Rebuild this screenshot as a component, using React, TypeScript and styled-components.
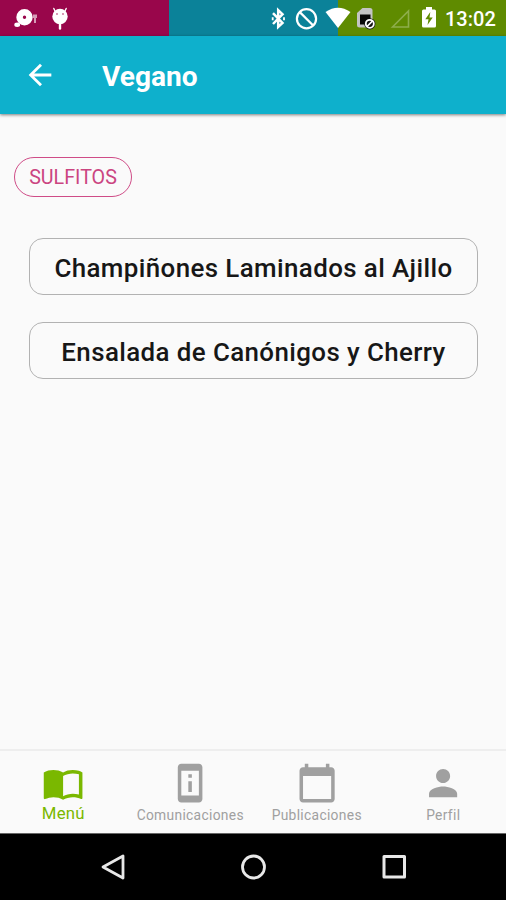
import React from "react";
import styled, { createGlobalStyle } from "styled-components";

const GlobalStyle = createGlobalStyle`
  * { box-sizing: border-box; }
  body { margin: 0; background: #fafafa; font-family: Roboto, "Liberation Sans", sans-serif; }
`;

const Screen = styled.div`
  display: flex;
  flex-direction: column;
  width: 506px;
  height: 900px;
  background: #fafafa;
  overflow: hidden;
`;

const StatusBar = styled.header`
  display: flex;
  justify-content: space-between;
  height: 36px;
  flex: none;
  background: linear-gradient(90deg, #99064b 0 169px, #0b8299 169px 338px, #5f8b00 338px);
`;

const StatusGroup = styled.div`
  display: flex;
  align-items: center;
`;

const StatusIcon = styled.svg<{ $gap?: number }>`
  display: block;
  flex: none;
  margin-left: ${(p) => p.$gap ?? 0}px;
`;

const Clock = styled.span`
  width: 50px;
  margin: 2px 11px 0 8px;
  color: #fff;
  font-size: 20px;
  font-weight: 500;
  line-height: 24px;
  white-space: nowrap;
`;

const AppBar = styled.div`
  display: flex;
  align-items: center;
  height: 78px;
  flex: none;
  padding-left: 23px;
  background: #0eb0cc;
  box-shadow: 0 1px 3px rgba(0, 0, 0, 0.5);
`;

const BackButton = styled.button`
  display: block;
  padding: 0;
  border: 0;
  background: none;
  height: 34px;
`;

const Title = styled.h1`
  margin: 3px 0 0 45px;
  color: #fff;
  font-size: 28.1px;
  font-weight: 700;
  line-height: 34px;
`;

const Content = styled.main`
  flex: 1;
  padding: 43px 28px 0 29px;
`;

const Chip = styled.div`
  display: flex;
  align-items: center;
  justify-content: center;
  width: 118px;
  height: 40px;
  margin: 0 0 41px -15px;
  border: 1.5px solid #cf4c87;
  border-radius: 20px;
  color: #cb4581;
  font-size: 19.7px;
  line-height: 24px;
  padding-top: 2px;
`;

const Dish = styled.div`
  display: flex;
  align-items: center;
  justify-content: center;
  height: 57px;
  margin-bottom: 27px;
  padding-top: 3px;
  border: 1px solid #b2b2b2;
  border-radius: 14px;
  color: #171717;
  font-size: 25.9px;
  font-weight: 500;
  letter-spacing: 0.4px;
  white-space: nowrap;
`;

const Tabs = styled.nav`
  display: grid;
  grid-template-columns: repeat(4, 1fr);
  height: 84px;
  flex: none;
  border-top: 2px solid #eeeeee;
`;

const Tab = styled.div<{ $active?: boolean }>`
  display: flex;
  flex-direction: column;
  align-items: center;
  padding: 11px 0 0 ${(p) => (p.$active ? 0 : 1)}px;
  color: ${(p) => (p.$active ? "#7ab800" : "#a0a0a0")};
`;

const TabLabel = styled.span<{ $active?: boolean }>`
  margin-top: ${(p) => (p.$active ? 0 : 2)}px;
  font-size: ${(p) => (p.$active ? 16.8 : 13.8)}px;
  line-height: 18px;
  letter-spacing: ${(p) => (p.$active ? 0.2 : 0.32)}px;
  white-space: nowrap;
`;

const SystemNav = styled.footer`
  display: flex;
  align-items: center;
  justify-content: space-between;
  height: 67px;
  flex: none;
  padding: 0 97px 0 98px;
  background: #000;
  border-top: 1px solid #666;
`;

const tabs = [
  {
    label: "Menú",
    active: true,
    path: "M21 5c-1.11-.35-2.33-.5-3.5-.5-1.95 0-4.05.4-5.5 1.5-1.45-1.1-3.55-1.5-5.5-1.5S2.45 4.9 1 6v14.65c0 .25.25.5.5.5.1 0 .15-.05.25-.05C3.1 20.45 5.05 20 6.5 20c1.95 0 4.05.4 5.5 1.5 1.35-.85 3.8-1.5 5.5-1.5 1.65 0 3.35.3 4.75 1.05.1.05.15.05.25.05.25 0 .5-.25.5-.5V6c-.6-.45-1.25-.75-2-1zm0 13.5c-1.1-.35-2.3-.5-3.5-.5-1.7 0-4.15.65-5.5 1.5V8c1.35-.85 3.8-1.5 5.5-1.5 1.2 0 2.4.15 3.5.5v11.5z",
  },
  {
    label: "Comunicaciones",
    path: "M13 7h-2v2h2V7zm0 4h-2v6h2v-6zm4-9.99L7 1c-1.1 0-2 .9-2 2v18c0 1.1.9 2 2 2h10c1.1 0 2-.9 2-2V3c0-1.1-.9-1.99-2-1.99zM17 19H7V5h10v14z",
  },
  {
    label: "Publicaciones",
    path: "M20 3h-1V1h-2v2H7V1H5v2H4c-1.1 0-2 .9-2 2v16c0 1.1.9 2 2 2h16c1.1 0 2-.9 2-2V5c0-1.1-.9-2-2-2zm0 18H4V8h16v13z",
  },
  {
    label: "Perfil",
    path: "M12 12c2.21 0 4-1.79 4-4s-1.79-4-4-4-4 1.79-4 4 1.79 4 4 4zm0 2c-2.67 0-8 1.34-8 4v2h16v-2c0-2.66-5.33-4-8-4z",
  },
];

const dishes = ["Champiñones Laminados al Ajillo", "Ensalada de Canónigos y Cherry"];

export default function App() {
  return (
    <>
      <GlobalStyle />
      <Screen>
        <StatusBar>
          <StatusGroup>
            <StatusIcon $gap={13} width="26" height="36" viewBox="0 0 26 36" fill="#fff">
              <path fillRule="evenodd" d="M11.500 9a8.200 8.200 0 1 1 0 16.400 8.200 8.200 0 0 1 0-16.400zm0 6.500a1.700 1.700 0 1 0 0 3.400 1.700 1.700 0 0 0 0-3.400z" />
              <ellipse cx="4.200" cy="24.800" rx="2.900" ry="2.200" />
              <path d="M20 14.500h4v3.500h-1v5h-2v-5h-1z" opacity=".6" />
            </StatusIcon>
            <StatusIcon $gap={12} width="18" height="36" viewBox="0 0 18 36">
              <path d="M4 11L2.800 8.500M14 11l1.200-2.500" stroke="#fff" strokeWidth="1.400" strokeLinecap="round" />
              <path d="M9 23v5.500" stroke="#fff" strokeWidth="2.400" strokeLinecap="round" />
              <circle cx="9" cy="16.500" r="7.700" fill="#fff" />
              <circle cx="6" cy="14" r="0.900" fill="#c46b94" />
              <circle cx="12" cy="14" r="0.900" fill="#c46b94" />
            </StatusIcon>
          </StatusGroup>
          <StatusGroup>
            <StatusIcon width="16" height="36" viewBox="0 0 16 36" fill="none" stroke="#fff" strokeWidth="2.500">
              <path d="M3 13.200l9.500 9.800-4.300 4V10.200l4.300 4L3 24" />
              <path d="M2.700 17.200v3M14 17.200v3" strokeWidth="1.800" />
            </StatusIcon>
            <StatusIcon $gap={8} width="24" height="36" viewBox="0 0 24 36" fill="none" stroke="#fff" strokeWidth="2.200">
              <circle cx="12.500" cy="18.800" r="9.600" />
              <path d="M5.800 12.100l13.400 13.400" />
            </StatusIcon>
            <StatusIcon $gap={7} width="26" height="36" viewBox="0 0 26 36" fill="#fff">
              <path d="M.5 12Q13 3.500 25.500 12L13 28z" />
            </StatusIcon>
            <StatusIcon $gap={5} width="20" height="36" viewBox="0 0 20 36">
              <path d="M6.500 8H14q2.500 0 2.500 2.500V25q0 2.500-2.500 2.500H3.500Q1 27.500 1 25V13z" fill="#c4c4c4" />
              <path d="M4 14.500h10.500V24.500H4z" fill="#080808" />
              <circle cx="13.800" cy="23.800" r="5.600" fill="#111" />
              <circle cx="13.800" cy="23.800" r="4" fill="none" stroke="#fff" strokeWidth="1.800" />
              <path d="M11 26.500l5.500-5.500" stroke="#fff" strokeWidth="1.700" />
            </StatusIcon>
            <StatusIcon $gap={13} width="22" height="36" viewBox="0 0 22 36">
              <path d="M3.500 27L19.500 11v16z" fill="none" stroke="#8eae4c" strokeWidth="1.600" />
            </StatusIcon>
            <StatusIcon $gap={10} width="16" height="36" viewBox="0 0 16 36">
              <path d="M5 7h6v2.500h2.500q1.500 0 1.500 1.500v15q0 1.500-1.500 1.500h-11Q1 27.500 1 26V11q0-1.500 1.500-1.500H5z" fill="#fff" />
              <path d="M9.300 12L4.300 19.200h3.200L6.500 25l5.200-7.500H8.500z" fill="#5f8b00" />
            </StatusIcon>
            <Clock>13:02</Clock>
          </StatusGroup>
        </StatusBar>
        <AppBar>
          <BackButton aria-label="Atrás">
            <svg width="34" height="34" viewBox="0 0 24 24" fill="#fff">
              <path d="M20 11H7.830l5.590-5.590L12 4l-8 8 8 8 1.410-1.410L7.830 13H20v-2z" />
            </svg>
          </BackButton>
          <Title>Vegano</Title>
        </AppBar>
        <Content>
          <Chip>SULFITOS</Chip>
          {dishes.map((name) => (
            <Dish key={name}>{name}</Dish>
          ))}
        </Content>
        <Tabs>
          {tabs.map((tab) => (
            <Tab key={tab.label} $active={tab.active}>
              <svg width="42.2" height="42.2" viewBox="0 0 24 24" fill="currentColor">
                <path d={tab.path} />
              </svg>
              <TabLabel $active={tab.active}>{tab.label}</TabLabel>
            </Tab>
          ))}
        </Tabs>
        <SystemNav>
          <svg width="30" height="30" viewBox="0 0 30 30" fill="none" stroke="#e8e8e8" strokeWidth="2.800" strokeLinejoin="round">
            <path d="M25 4v22L5 15z" />
          </svg>
          <svg width="30" height="30" viewBox="0 0 30 30" fill="none" stroke="#e8e8e8" strokeWidth="2.800">
            <circle cx="14.500" cy="15" r="11" />
          </svg>
          <svg width="30" height="30" viewBox="0 0 30 30" fill="none" stroke="#e8e8e8" strokeWidth="3" strokeLinejoin="round">
            <path d="M5 4.500h20.500v20.500H5z" />
          </svg>
        </SystemNav>
      </Screen>
    </>
  );
}
